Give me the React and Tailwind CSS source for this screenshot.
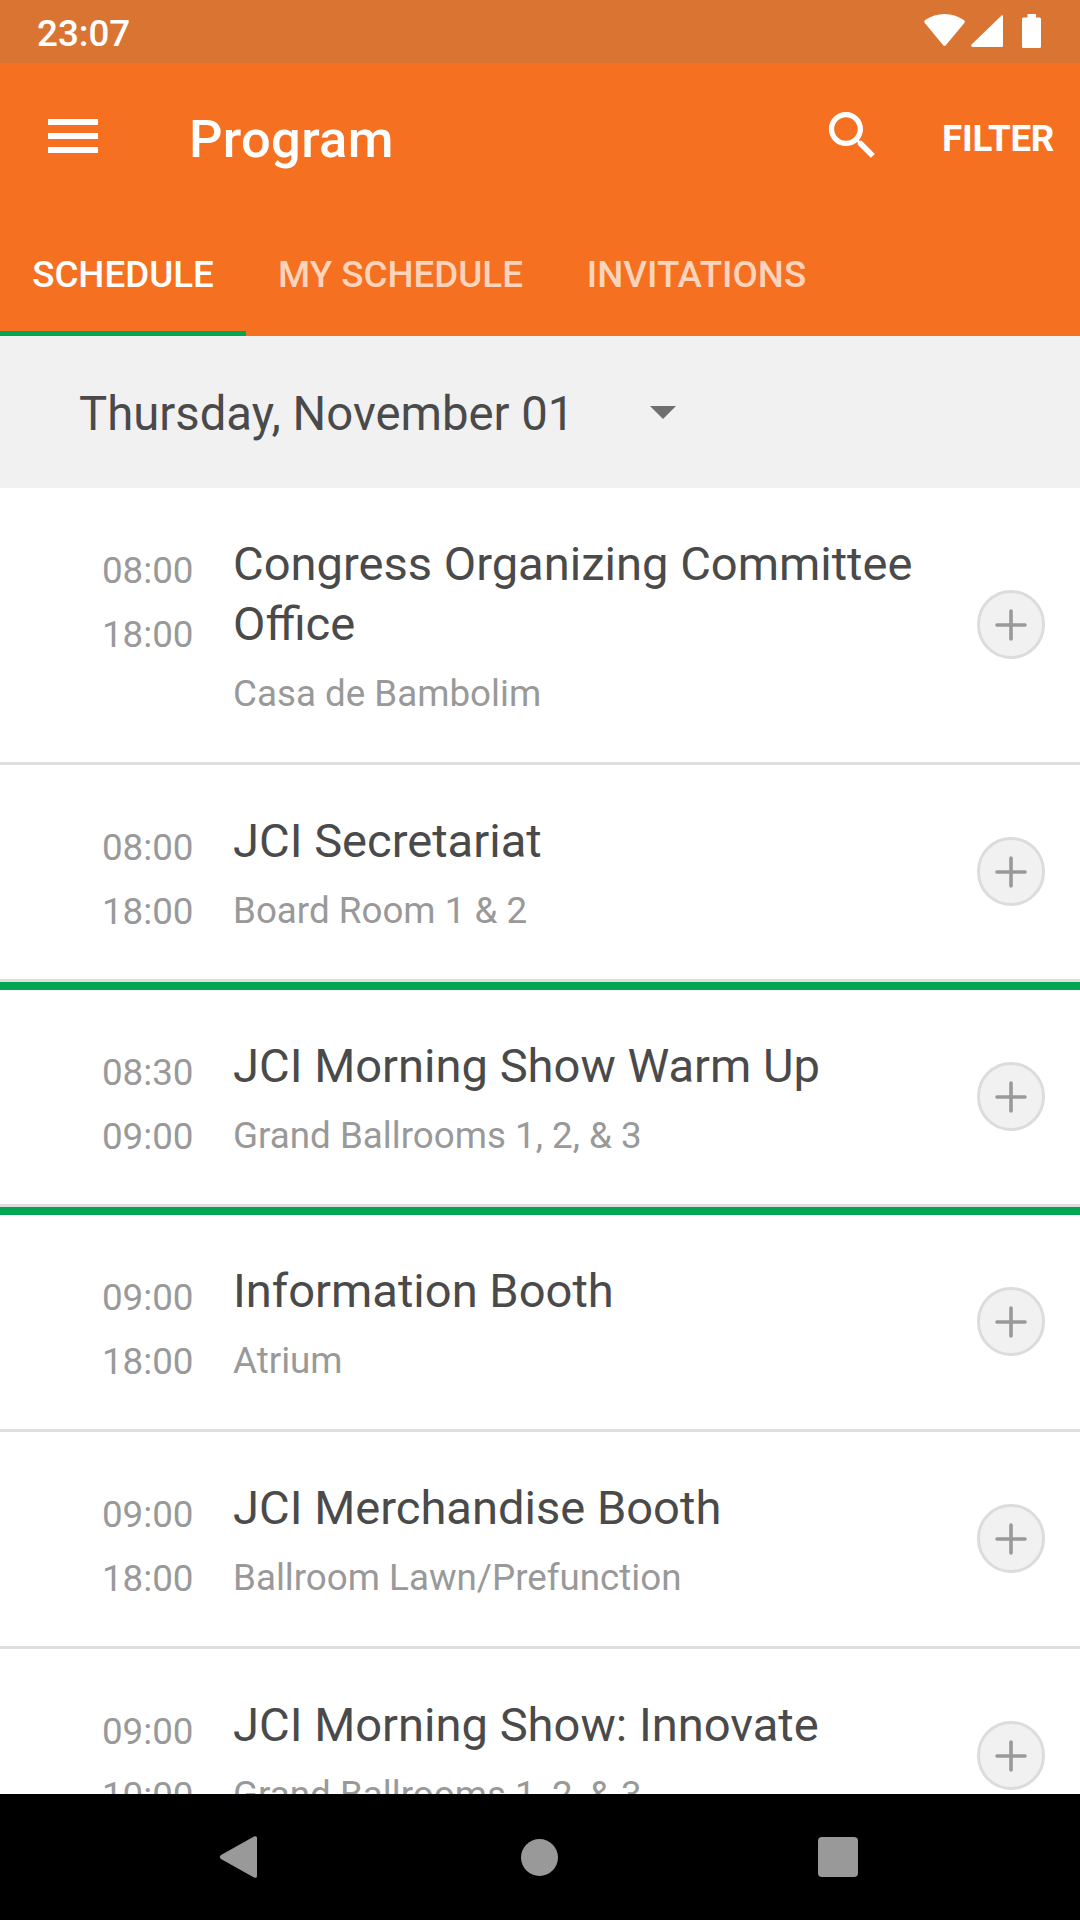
import clsx from "clsx";

const tabs = [
  { id: "schedule", label: "SCHEDULE", width: "w-[246px]" },
  { id: "my-schedule", label: "MY SCHEDULE", width: "w-[309px]" },
  { id: "invitations", label: "INVITATIONS", width: "w-[283px]" },
];

const sessions = [
  { start: "08:00", end: "18:00", title: "Congress Organizing Committee Office", room: "Casa de Bambolim" },
  { start: "08:00", end: "18:00", title: "JCI Secretariat", room: "Board Room 1 & 2" },
  { start: "08:30", end: "09:00", title: "JCI Morning Show Warm Up", room: "Grand Ballrooms 1, 2, & 3", marked: true },
  { start: "09:00", end: "18:00", title: "Information Booth", room: "Atrium", marked: true },
  { start: "09:00", end: "18:00", title: "JCI Merchandise Booth", room: "Ballroom Lawn/Prefunction" },
  { start: "09:00", end: "10:00", title: "JCI Morning Show: Innovate", room: "Grand Ballrooms 1, 2, & 3" },
];

const StatusBar = () => (
  <div className="flex h-[63px] shrink-0 items-center justify-between bg-[#da7433] pl-[37px] pr-[38px] text-white">
    <span className="pt-[5px] text-[36.75px] leading-[44px] font-medium">23:07</span>
    <svg width="118" height="36" viewBox="0 0 118 36" fill="currentColor" className="mb-px">
      <path d="M1.2 10.5 C-0.2 9.4 0 8 1.2 7.1 C7 3 13.500 1 20.500 1 C27.500 1 34 3 39.800 7.100 C41 8 41.200 9.400 39.900 10.500 L22 32 C21 33.200 20 33.200 19 32 Z" />
      <path d="M77.600 2.500 C78.300 1.900 79 2.300 79 3.200 V32.500 Q79 34 77.500 34 H49 C47 34 46.600 32.500 47.800 31.300 Z" />
      <path d="M103.500 1 H112 V4.500 H115.500 Q117 4.500 117 6 V33.500 Q117 35 115.500 35 H99.500 Q98 35 98 33.500 V6 Q98 4.500 99.500 4.500 H103.500 Z" />
    </svg>
  </div>
);

const Toolbar = () => (
  <div className="flex h-[147px] items-center pl-12 pr-[26px] text-white">
    <button className="mb-[2px] flex w-[50px] flex-col gap-2" aria-label="Menu">
      <span className="h-1.5 bg-white" />
      <span className="h-1.5 bg-white" />
      <span className="h-1.5 bg-white" />
    </button>
    <h1 className="ml-[91px] pt-[4px] text-[52.5px] leading-[62px] font-medium tracking-[0.3px]">Program</h1>
    <button className="mb-[3px] ml-auto" aria-label="Search">
      <svg width="63" height="63" viewBox="0 0 24 24" fill="currentColor">
        <path d="M15.5 14h-.79l-.28-.27C15.41 12.590 16 11.110 16 9.500 16 5.910 13.090 3 9.500 3S3 5.910 3 9.500 5.910 16 9.500 16c1.610 0 3.090-.59 4.230-1.570l.27.280v.790l5 4.990L20.490 19l-4.990-5zm-6 0C7.010 14 5 11.990 5 9.500S7.010 5 9.500 5 14 7.010 14 9.500 11.990 14 9.500 14z" />
      </svg>
    </button>
    <button className="ml-[58px] pt-[4px] text-[36.75px] font-bold tracking-[-0.3px]">FILTER</button>
  </div>
);

const Tabs = ({ active }) => (
  <div className="flex h-[126px]">
    {tabs.map((tab) => (
      <button
        key={tab.id}
        className={clsx(
          "flex h-full items-center justify-center border-b-[5px] pt-[8px] text-[36.75px] font-medium whitespace-nowrap",
          tab.width,
          tab.id === active ? "border-[#00a651] text-white" : "border-transparent text-[#fcd4bc]"
        )}
      >
        {tab.label}
      </button>
    ))}
  </div>
);

const DatePicker = () => (
  <div className="flex h-[152px] shrink-0 items-center bg-[#f1f1f1] pl-[79px] text-[#4a4a4a]">
    <span className="w-[571px] pt-[4px] text-[47.25px] leading-[56px]">Thursday, November 01</span>
    <svg width="26" height="13" viewBox="0 0 26 13" fill="#6f6f6f">
      <path d="M0 0H26L13 13Z" />
    </svg>
  </div>
);

const AddButton = () => (
  <button
    className="flex h-[69px] w-[68px] items-center justify-center rounded-full border-[3px] border-[#dcdcdc] bg-[#f1f1f1]"
    aria-label="Add to my schedule"
  >
    <svg width="32" height="32" viewBox="0 0 32 32" stroke="#999999" strokeWidth="3.6" strokeLinecap="round">
      <path d="M16 2V30M2 16H30" />
    </svg>
  </button>
);

const SessionRow = ({ session }) => (
  <li
    className={clsx(
      "flex shrink-0 border-b-[3px] border-b-[#dedede]",
      session.marked && "border-t-8 border-t-[#00a651]"
    )}
  >
    <div className="flex w-[193.5px] flex-col items-end pt-[51px] text-[36.75px] leading-[64px] text-[#999999]">
      <span>{session.start}</span>
      <span>{session.end}</span>
    </div>
    <div className="ml-[39.5px] w-[700px] pt-[46px] pb-[46px]">
      <h2 className="text-[47.1px] leading-[60px] text-[#4a4a4a]">{session.title}</h2>
      <p className="mt-[18px] text-[36.75px] leading-[44px] text-[#999999]">{session.room}</p>
    </div>
    <div className="ml-auto flex items-center pr-[35.5px] pb-px">
      <AddButton />
    </div>
  </li>
);

const NavBar = () => (
  <div className="flex h-[126px] shrink-0 items-center justify-between bg-black px-[219px] text-[#999999]">
    <svg width="38" height="42" viewBox="0 0 38 42" fill="currentColor">
      <path d="M35 0.600 C37 -0.400 38 0.500 38 2 V40 C38 41.500 37 42.400 35 41.400 L2 23 C0.400 22 0.400 20 2 19 Z" />
    </svg>
    <span className="ml-[3px] h-[37px] w-[37px] rounded-full bg-[#999999]" />
    <span className="mr-[3px] h-10 w-10 rounded-[4px] bg-[#999999]" />
  </div>
);

export default function App() {
  return (
    <div className="flex h-[1920px] w-[1080px] flex-col overflow-hidden bg-white font-['Roboto',sans-serif]">
      <StatusBar />
      <header className="shrink-0 bg-[#f57121]">
        <Toolbar />
        <Tabs active="schedule" />
      </header>
      <DatePicker />
      <ul className="flex min-h-0 flex-1 flex-col overflow-hidden">
        {sessions.map((session) => (
          <SessionRow key={session.title} session={session} />
        ))}
      </ul>
      <NavBar />
    </div>
  );
}
